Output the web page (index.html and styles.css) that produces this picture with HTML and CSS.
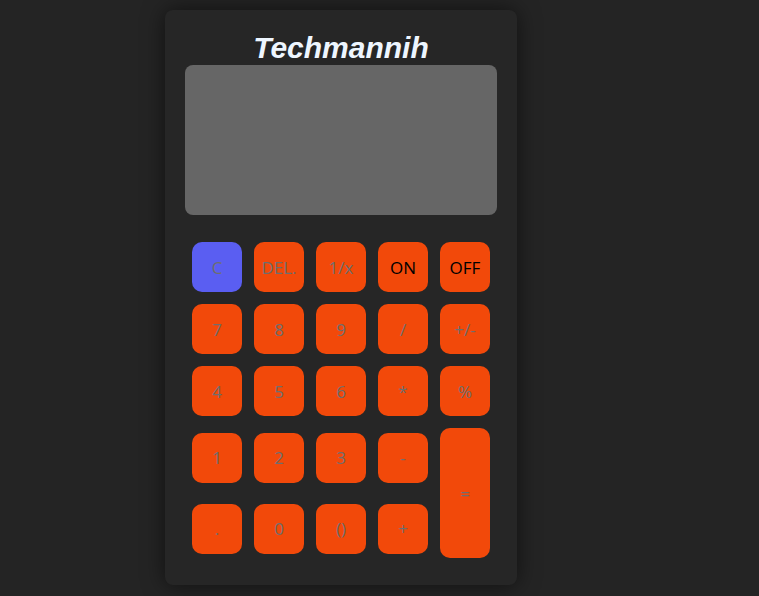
FILE: index.html
```html
<!DOCTYPE html>
<html lang="en">
<head>
<meta charset="utf-8">
<title>Techmannih Calculator</title>
<link rel="stylesheet" href="styles.css">
</head>
<body>
<div class="calculator">
  <h1 class="title">Techmannih</h1>
  <div class="display"></div>
  <div class="keys">
    <button class="key key-clear">C</button>
    <button class="key">DEL.</button>
    <button class="key">1/x</button>
    <button class="key key-power">ON</button>
    <button class="key key-power">OFF</button>
    <button class="key">7</button>
    <button class="key">8</button>
    <button class="key">9</button>
    <button class="key">/</button>
    <button class="key">+/-</button>
    <button class="key">4</button>
    <button class="key">5</button>
    <button class="key">6</button>
    <button class="key">*</button>
    <button class="key">%</button>
  </div>
  <div class="keys-bottom">
    <div class="keys-left">
      <button class="key">1</button>
      <button class="key">2</button>
      <button class="key">3</button>
      <button class="key">-</button>
      <button class="key">.</button>
      <button class="key">0</button>
      <button class="key">()</button>
      <button class="key">+</button>
    </div>
    <button class="key key-equals">=</button>
  </div>
</div>
</body>
</html>
```
FILE: styles.css
```css
html, body {
  margin: 0;
  padding: 0;
  background: #242424;
}
body {
  min-height: 596px;
  padding-top: 10px;
  box-sizing: border-box;
}
.calculator {
  box-sizing: border-box;
  width: 352px;
  height: 575px;
  margin-left: 165px;
  padding: 21px 20px 27px;
  background: #262626;
  border-radius: 8px;
  box-shadow: 0 0 22px rgba(0, 0, 0, 0.55);
}
.title {
  margin: 0;
  font-family: "Liberation Sans", Arial, sans-serif;
  font-style: italic;
  font-weight: bold;
  font-size: 30px;
  line-height: 34px;
  text-align: center;
  color: #eef6ff;
}
.display {
  height: 150px;
  background: #666666;
  border-radius: 8px;
}
.keys {
  margin-top: 27px;
  display: grid;
  grid-template-columns: repeat(5, 50px);
  gap: 12px;
  justify-content: center;
}
.keys-bottom {
  margin-top: 12px;
  display: flex;
  justify-content: center;
  align-items: center;
  gap: 12px;
}
.keys-left {
  display: grid;
  grid-template-columns: repeat(4, 50px);
  column-gap: 12px;
  row-gap: 21px;
}
.key {
  width: 50px;
  height: 50px;
  padding: 0;
  border: none;
  border-radius: 10px;
  background: #f2490a;
  color: #6e6e6e;
  font-family: "Open Sans", "Noto Sans", sans-serif;
  font-size: 17px;
  line-height: 1;
}
.key-clear {
  background: #5a5ef2;
}
.key-power {
  color: #000000;
}
.key-equals {
  height: 130px;
}
```
